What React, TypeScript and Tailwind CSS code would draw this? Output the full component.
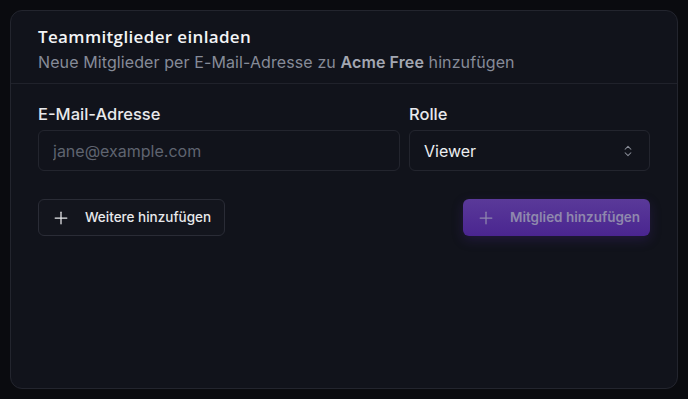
import { Plus, ChevronsUpDown } from "lucide-react"

export default function App() {
  return (
    <div className="min-h-[399px] w-full bg-[#0a0b0f] p-[10px] font-['Inter',sans-serif]">
      <div className="flex h-[379px] flex-col rounded-xl border border-[#23252e] bg-[#11131b]">
        <div className="border-b border-[#20222b] px-[27px] pt-[15px] pb-[9px]">
          <h2 className="font-['Open_Sans',sans-serif] text-[17px] leading-[22px] font-semibold tracking-[0.35px] text-[#f3f4f6]">
            Teammitglieder einladen
          </h2>
          <p className="mt-[2px] text-[16px] leading-[24px] tracking-[0.1px] text-[#868b98]">
            Neue Mitglieder per E-Mail-Adresse zu{" "}
            <span className="font-semibold text-[#a3a7b2]">Acme Free</span> hinzufügen
          </p>
        </div>

        <div className="px-[27px] pt-[19px]">
          <div className="flex gap-[9px]">
            <div className="flex w-[362px] flex-col">
              <label className="text-[16.5px] leading-[22px] font-medium text-[#e8e9ec]">
                E-Mail-Adresse
              </label>
              <input
                placeholder="jane@example.com"
                className="mt-[5px] h-[41px] rounded-md border border-[#23252e] bg-transparent px-[14px] text-[16px] text-[#e8e9ec] outline-none placeholder:text-[#5f6470]"
              />
            </div>
            <div className="flex flex-1 flex-col">
              <label className="text-[16.5px] leading-[22px] font-medium text-[#e8e9ec]">Rolle</label>
              <button className="mt-[5px] flex h-[41px] items-center justify-between rounded-md border border-[#23252e] px-[14px] text-[16px] text-[#eceef1]">
                <span>Viewer</span>
                <ChevronsUpDown className="size-[14px] text-[#8a8e99]" strokeWidth={1.75} />
              </button>
            </div>
          </div>

          <div className="mt-[28px] flex items-center justify-between">
            <button className="flex h-[37px] w-[187px] items-center gap-[14px] rounded-md border border-[#2a2c36] bg-[#13151d] pl-[12px] text-[13.5px] font-medium text-[#e8e9ec]">
              <Plus className="size-[20px]" strokeWidth={1.5} />
              Weitere hinzufügen
            </button>
            <button className="flex h-[37px] w-[187px] items-center gap-[14px] rounded-md bg-gradient-to-b from-[#5a3999] to-[#4a2590] pl-[13px] text-[13.5px] font-semibold text-[#8f88ad] shadow-[0_4px_12px_rgba(80,45,160,0.25)]">
              <Plus className="size-[20px]" strokeWidth={1.5} />
              Mitglied hinzufügen
            </button>
          </div>
        </div>
      </div>
    </div>
  )
}
